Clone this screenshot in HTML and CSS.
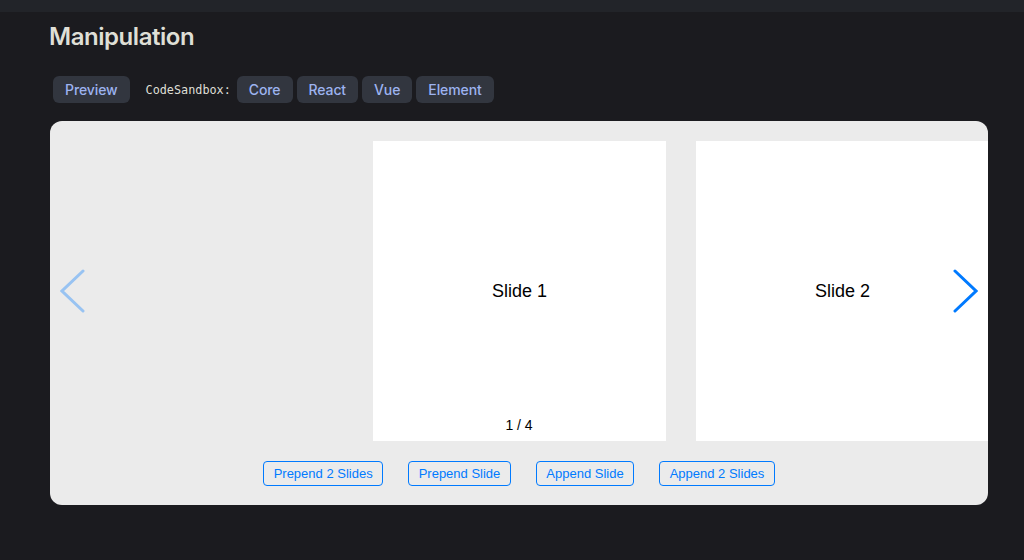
FILE: index.html
```html
<!DOCTYPE html>
<html lang="en">
<head>
  <meta charset="UTF-8" />
  <title>Manipulation</title>
  <link rel="stylesheet" href="styles.css">
</head>
<body>
  <div class="topbar"></div>

  <div class="content">
    <h1>Manipulation</h1>

    <div class="demo-links">
      <button class="link-btn">Preview</button>
      <span class="sandbox-label">CodeSandbox:</span>
      <button class="link-btn">Core</button>
      <button class="link-btn">React</button>
      <button class="link-btn">Vue</button>
      <button class="link-btn">Element</button>
    </div>

    <div class="demo-card">
      <div class="swiper">
        <div class="swiper-wrapper">
          <div class="swiper-slide">Slide 1</div>
          <div class="swiper-slide">Slide 2</div>
        </div>

        <svg class="nav-arrow nav-prev" width="27" height="44" viewBox="0 0 27 44">
          <polyline points="23,2 2,22 23,42" />
        </svg>
        <svg class="nav-arrow nav-next" width="27" height="44" viewBox="0 0 27 44">
          <polyline points="4,2 25,22 4,42" />
        </svg>

        <div class="pagination">1 / 4</div>
      </div>

      <div class="append-buttons">
        <button class="outline-btn">Prepend 2 Slides</button>
        <button class="outline-btn">Prepend Slide</button>
        <button class="outline-btn">Append Slide</button>
        <button class="outline-btn">Append 2 Slides</button>
      </div>
    </div>
  </div>
</body>
</html>
```

FILE: styles.css
```css
body {
  margin: 0;
  padding: 0;
  background: #1b1b1f;
  font-family: Inter, 'Noto Sans', sans-serif;
  color: #dfdfd6;
}

.topbar {
  height: 12px;
  background: #222429;
}

.content {
  padding: 0 36px 0 50px;
}

h1 {
  margin: 9px 0 0 -1px;
  font-size: 24px;
  line-height: 32px;
  font-weight: 600;
  letter-spacing: -0.45px;
  color: #dfdfd6;
}

.demo-links {
  display: flex;
  align-items: center;
  gap: 4px;
  margin-top: 23px;
  padding-left: 3px;
}

.link-btn {
  height: 27px;
  padding: 0 12px;
  border: none;
  border-radius: 6px;
  background: #32363f;
  color: #9db3f0;
  font-family: Inter, 'Noto Sans', sans-serif;
  font-size: 14px;
  font-weight: 500;
  letter-spacing: -0.1px;
  cursor: pointer;
}

.sandbox-label {
  margin: 0 2px 0 12px;
  font-family: 'DejaVu Sans Mono', monospace;
  font-size: 11.8px;
  color: #dfdfd6;
}

.demo-card {
  width: 938px;
  margin-top: 18px;
  padding: 20px 0 19px;
  background: #ebebeb;
  border-radius: 12px;
  overflow: hidden;
  font-family: 'Liberation Sans', Arial, sans-serif;
  font-size: 14px;
  color: #000;
}

.swiper {
  position: relative;
  height: 300px;
  overflow: hidden;
}

.swiper-wrapper {
  display: flex;
  gap: 30px;
  height: 100%;
  transform: translateX(323px);
}

.swiper-slide {
  flex: 0 0 293px;
  display: flex;
  align-items: center;
  justify-content: center;
  background: #fff;
  font-size: 18px;
}

.nav-arrow {
  position: absolute;
  top: 50%;
  margin-top: -22px;
  fill: none;
  stroke: #007aff;
  stroke-width: 3;
  stroke-linecap: round;
  stroke-linejoin: miter;
}

.nav-prev {
  left: 10px;
  opacity: 0.35;
}

.nav-next {
  right: 10px;
}

.pagination {
  position: absolute;
  left: 0;
  right: 0;
  bottom: 8px;
  text-align: center;
  line-height: 16px;
}

.append-buttons {
  display: flex;
  justify-content: center;
  gap: 25px;
  margin-top: 20px;
}

.outline-btn {
  height: 25px;
  padding: 0 9.5px;
  border: 1px solid #007aff;
  border-radius: 4px;
  background: transparent;
  color: #007aff;
  font-family: 'Liberation Sans', Arial, sans-serif;
  font-size: 13px;
  cursor: pointer;
}
```
